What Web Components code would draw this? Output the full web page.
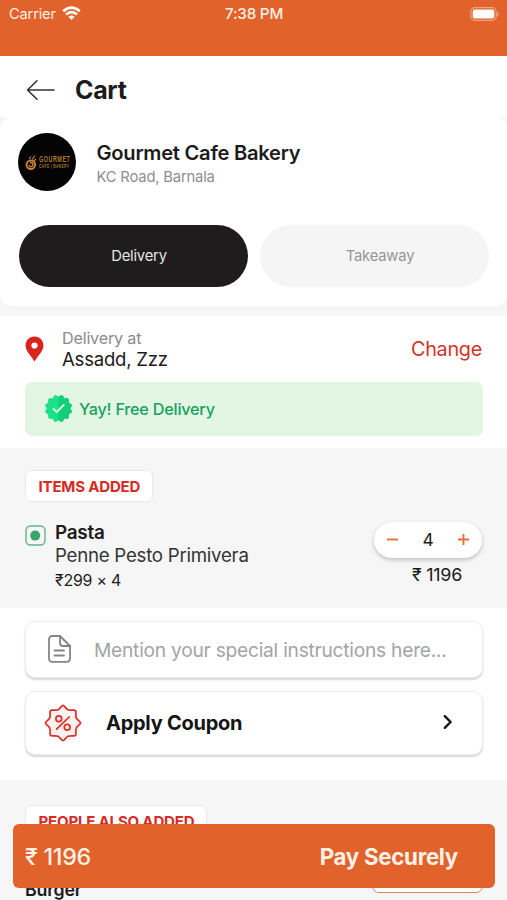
<!DOCTYPE html>
<html lang="en">
<head>
<meta charset="utf-8">
<title>Cart</title>
<style>
  body {
    margin: 0;
    height: 900px;
    overflow: hidden;
    background: #f6f6f6;
    color: #1d1b1c;
    font-family: Inter, "Liberation Sans", sans-serif;
  }
</style>
</head>
<body>
<cart-page></cart-page>

<script>
// slightly tightened tracking, shared by every element
const BASE = '<style>* { letter-spacing: -.013em; }</style>';

const define = (name, html, setup) => {
  const template = document.createElement('template');
  template.innerHTML = BASE + html;
  customElements.define(name, class extends HTMLElement {
    constructor() {
      super();
      this.attachShadow({ mode: 'open' }).appendChild(template.content.cloneNode(true));
    }
    connectedCallback() {
      if (setup) setup(this, this.shadowRoot);
    }
  });
};

define('status-bar', `
  <style>
    :host {
      display: grid;
      grid-template-columns: 1fr auto 1fr;
      align-items: center;
      box-sizing: border-box;
      height: 56px;
      padding: 4px 8px 32px 9px;
      background: #e1632b;
      color: #fff0e6;
      font-size: 14.7px;
      line-height: 20px;
    }
    .carrier { display: flex; align-items: center; gap: 6px; }
    .carrier svg { margin-top: -1px; }
    .time { font-size: 15.2px; font-weight: 500; }
    .battery { justify-self: end; margin-top: -1px; }
    svg { display: block; }
  </style>
  <div class="carrier">
    <span>Carrier</span>
    <svg width="19" height="15" viewBox="0 0 19 15" fill="none" stroke="#fff" stroke-width="2.6">
      <path d="M1.2 5.2Q9.5-2 17.8 5.2M4 8.6Q9.5 3.8 15 8.6"/>
      <path d="M6.4 10.7Q9.5 8.2 12.6 10.7L9.5 14Z" fill="#fff" stroke="none"/>
    </svg>
  </div>
  <span class="time">7:38 PM</span>
  <svg class="battery" width="29" height="14" viewBox="0 0 29 14">
    <rect x=".8" y=".7" width="25.4" height="12.6" rx="4" fill="none" stroke="#f0a47f" stroke-width="1.2"/>
    <rect x="2.7" y="2.6" width="21.6" height="8.8" rx="2" fill="#fff"/>
    <path d="M27.3 4.8Q29 5.5 29 7T27.3 9.2Z" fill="#f0a47f"/>
  </svg>
`);

define('page-header', `
  <style>
    :host {
      display: flex;
      align-items: center;
      gap: 20px;
      box-sizing: border-box;
      height: 61px;
      padding: 0 26px 0;
      background: #fff;
    }
    svg { display: block; margin-top: 6px; }
    h1 { margin: 7px 0 0; font-size: 25px; line-height: 30px; font-weight: 700; }
  </style>
  <svg width="29" height="22" viewBox="0 0 29 22" fill="none" stroke="#333" stroke-width="1.6" stroke-linecap="round" stroke-linejoin="round">
    <path d="M28 11H1.5M11 1.8L1.5 11L11 20.2"/>
  </svg>
  <h1><slot></slot></h1>
`);

define('store-logo', `
  <style>
    :host {
      display: flex;
      align-items: center;
      justify-content: center;
      gap: 2px;
      flex: none;
      width: 58px;
      height: 58px;
      border-radius: 50%;
      background: #030303;
      color: #b07a35;
    }
    .words { display: grid; width: 31px; justify-items: start; }
    .name { font: 700 9px/9px "Liberation Sans", sans-serif; letter-spacing: .9px; transform: scaleX(.6); transform-origin: left; }
    .sub { font: 700 5px/4.5px "Liberation Sans", sans-serif; letter-spacing: .5px; white-space: pre; transform: scaleX(.67); transform-origin: left; }
    svg { display: block; flex: none; }
  </style>
  <svg width="12" height="17" viewBox="0 0 12 17" fill="none" stroke="#c58432">
    <circle cx="5.8" cy="10.8" r="4.2" stroke-width="2"/>
    <path d="M5 8.8Q9 8 7.5 12Q5 14 4 11" stroke-width="1.4"/>
    <path d="M4 5L6 2.5M7 5.5L10 1.5M9 7L11 5" stroke-width="1.2"/>
  </svg>
  <div class="words"><span class="name">GOURMET</span><span class="sub">CAFE | BAKERY</span></div>
`);

define('pill-tab', `
  <style>
    :host {
      display: flex;
      align-items: center;
      justify-content: center;
      flex: 1;
      height: 62px;
      border-radius: 31px;
      background: #f5f5f5;
      color: #969696;
      font-size: 14.8px;
      padding-left: 11px;
      box-sizing: border-box;
    }
    :host([selected]) { background: #1f1c1d; color: #e6e4e4; }
  </style>
  <slot></slot>
`);

define('store-card', `
  <style>
    :host {
      display: block;
      box-sizing: border-box;
      height: 189px;
      padding: 16px 18px 0;
      border-radius: 12px;
      background: #fff;
    }
    .store { display: flex; align-items: center; gap: 20.5px; }
    .text { padding-top: 4px; }
    h2 { margin: 0; font-size: 20.15px; line-height: 26px; font-weight: 600; }
    p { margin: 0; font-size: 14.8px; line-height: 22px; color: #8e8e8e; }
    .tabs { display: flex; gap: 12px; padding: 34.4px 0 0 1px; }
  </style>
  <div class="store">
    <store-logo></store-logo>
    <div class="text">
      <h2><slot name="name"></slot></h2>
      <p><slot name="address"></slot></p>
    </div>
  </div>
  <div class="tabs"><slot></slot></div>
`);

define('delivery-address', `
  <style>
    :host { display: flex; align-items: center; height: 42px; }
    svg { display: block; margin-right: 18px; }
    .text { flex: 1; }
    .label { font-size: 16.2px; line-height: 20px; color: #8b8b8b; }
    .value { font-size: 18.6px; line-height: 22px; }
    .change { font-size: 19.8px; color: #d3332b; margin-right: 1px; }
  </style>
  <svg width="19" height="26" viewBox="0 0 19 26">
    <path d="M9.5.5C4.2.5.6 4.4.6 9.4C.6 15 5.5 18.8 9.5 25.5C13.5 18.8 18.4 15 18.4 9.4C18.4 4.4 14.8.5 9.5.5Z" fill="#da251c"/>
    <circle cx="9.5" cy="9.5" r="3.1" fill="#fff"/>
  </svg>
  <div class="text">
    <div class="label">Delivery at</div>
    <div class="value"><slot></slot></div>
  </div>
  <span class="change">Change</span>
`);

define('offer-banner', `
  <style>
    :host {
      display: flex;
      align-items: center;
      gap: 6px;
      box-sizing: border-box;
      height: 54px;
      padding: 0 0 1px 19px;
      border-radius: 7px;
      background: #e3f6e3;
      color: #16a25d;
      font-size: 16.2px;
      font-weight: 500;
    }
    svg { display: block; }
  </style>
  <svg width="29" height="29" viewBox="-14.5 -14.5 29 29">
    <defs><clipPath id="right"><rect x="0" y="-15" width="15" height="30"/></clipPath></defs>
    <path class="burst" fill="#19e286" stroke="#19e286" stroke-linejoin="round"/>
    <path class="burst" fill="#12cf79" stroke="#12cf79" stroke-linejoin="round" clip-path="url(#right)"/>
    <path d="M-5 .3L-1.7 3.5L5.3-3.6" fill="none" stroke="#e9fff0" stroke-width="1.8" stroke-linecap="round"/>
  </svg>
  <slot></slot>
`, (host, root) => {
  // twelve-pointed seal
  const points = [];
  for (let i = 0; i < 24; i++) {
    const r = i % 2 ? 11.4 : 13.6;
    const a = (i + 1) * Math.PI / 12;
    points.push((r * Math.cos(a)).toFixed(2) + ' ' + (r * Math.sin(a)).toFixed(2));
  }
  root.querySelectorAll('.burst').forEach(p => p.setAttribute('d', 'M' + points.join('L') + 'Z'));
});

define('section-tag', `
  <style>
    :host {
      display: flex;
      align-items: center;
      box-sizing: border-box;
      width: fit-content;
      height: 32px;
      padding: 0 12px 0 12.5px;
      border: 1px solid #e9e9e9;
      border-radius: 6px;
      background: #fff;
      color: #da2a25;
      font-size: 15.05px;
      font-weight: 700;
      white-space: nowrap;
    }
  </style>
  <slot></slot>
`);

define('qty-stepper', `
  <style>
    :host {
      display: flex;
      align-items: center;
      justify-content: space-between;
      box-sizing: border-box;
      width: 108px;
      height: 36px;
      margin-right: 1px;
      padding: 0 12px 2px;
      border-radius: 18px;
      background: #fff;
      box-shadow: 0 2px 4px rgba(0, 0, 0, .22);
      font-size: 17.4px;
    }
    svg { display: block; }
  </style>
  <svg width="13" height="13" stroke="#e66b35" stroke-width="1.8"><path d="M1 6.5H12"/></svg>
  <slot></slot>
  <svg width="13" height="13" stroke="#e66b35" stroke-width="1.8"><path d="M1 6.5H12M6.5 1V12"/></svg>
`);

define('cart-item', `
  <style>
    :host { display: flex; }
    .veg { display: block; margin: 4px 9px 0 0; }
    .text { flex: 1; padding-top: 1px; }
    .name { font-size: 18.9px; line-height: 22px; font-weight: 600; }
    .detail { font-size: 18.65px; line-height: 23px; color: #343434; }
    .rate { padding-top: 1px; font-size: 15.9px; line-height: 26px; }
    .side { display: flex; flex-direction: column; align-items: flex-end; padding-top: 1px; }
    .total { padding: 5px 21px 0 0; font-size: 17.9px; line-height: 24px; }
  </style>
  <svg class="veg" width="21" height="21" viewBox="0 0 21 21">
    <rect x="1" y="1" width="19" height="19" rx="4.5" fill="none" stroke="#62b68b" stroke-width="1.4"/>
    <circle cx="10.2" cy="10.6" r="5" fill="#37a66b"/>
  </svg>
  <div class="text">
    <div class="name"><slot name="name"></slot></div>
    <div class="detail"><slot name="detail"></slot></div>
    <div class="rate"><slot name="rate"></slot></div>
  </div>
  <div class="side">
    <qty-stepper><slot name="qty"></slot></qty-stepper>
    <div class="total"><slot name="total"></slot></div>
  </div>
`);

define('action-card', `
  <style>
    :host {
      display: flex;
      align-items: center;
      box-sizing: border-box;
      border: 1px solid #ececec;
      border-radius: 10px;
      background: #fff;
      box-shadow: 0 2px 2px rgba(0, 0, 0, .16);
    }
    .label { flex: 1; }
  </style>
  <slot name="icon"></slot>
  <span class="label"><slot></slot></span>
  <slot name="end"></slot>
`);

define('note-icon', `
  <style>:host { display: block; } svg { display: block; }</style>
  <svg width="23" height="28" viewBox="0 0 23 28" fill="none" stroke="#858585" stroke-width="1.8" stroke-linecap="round" stroke-linejoin="round">
    <path d="M4.5 1H12L22 11V23.2Q22 26.8 18.5 26.8H4.5Q1 26.8 1 23.2V4.5Q1 1 4.5 1Z"/>
    <path d="M12 1V8Q12 11 15 11H22M6.5 15.5H16M6.5 20.5H16"/>
  </svg>
`);

define('coupon-icon', `
  <style>:host { display: block; } svg { display: block; }</style>
  <svg width="38" height="38" viewBox="-19 -19 38 38" fill="none" stroke="#da3025" stroke-width="1.7" stroke-linecap="round" stroke-linejoin="round">
    <path fill="#fff1f1" d="M0-17.6C1.4-17.6 3-14.3 5-13.3C6.5-12.6 9-12.9 11-12.9Q12.9-12.9 12.9-11C12.9-9 12.6-6.5 13.3-5C14.3-3 17.6-1.4 17.6 0C17.6 1.4 14.3 3 13.3 5C12.6 6.5 12.9 9 12.9 11Q12.9 12.9 11 12.9C9 12.9 6.5 12.6 5 13.3C3 14.3 1.4 17.6 0 17.6C-1.4 17.6-3 14.3-5 13.3C-6.5 12.6-9 12.9-11 12.9Q-12.9 12.9-12.9 11C-12.9 9-12.6 6.5-13.3 5C-14.3 3-17.6 1.4-17.6 0C-17.6-1.4-14.3-3-13.3-5C-12.6-6.5-12.9-9-12.9-11Q-12.9-12.9-11-12.9C-9-12.9-6.5-12.6-5-13.3C-3-14.3-1.4-17.6 0-17.6Z"/>
    <path d="M6.2-6L-6.4 6.2"/>
    <circle cx="-4.2" cy="-4.3" r="2.9"/>
    <circle cx="4.2" cy="4.2" r="2.9"/>
  </svg>
`);

define('chevron-icon', `
  <style>:host { display: block; } svg { display: block; }</style>
  <svg width="11" height="16" viewBox="0 0 11 16" fill="none" stroke="#161616" stroke-width="2.4" stroke-linecap="round" stroke-linejoin="round">
    <path d="M2.8 1.2L8.6 7L2.8 12.8"/>
  </svg>
`);

define('suggested-item', `
  <style>
    :host { display: flex; align-items: flex-end; justify-content: space-between; height: 61px; }
    .name { font-size: 17.8px; line-height: 20px; font-weight: 600; margin-bottom: -2px; }
    .add {
      box-sizing: border-box;
      width: 111px;
      height: 34px;
      margin: 0 0 5px;
      border: 1.4px solid #e58253;
      border-radius: 7px;
      background: #fff;
    }
  </style>
  <span class="name"><slot></slot></span>
  <div class="add"></div>
`);

define('pay-bar', `
  <style>
    :host {
      position: absolute;
      left: 13px;
      right: 12px;
      top: 824px;
      display: flex;
      align-items: center;
      justify-content: space-between;
      box-sizing: border-box;
      height: 64px;
      padding: 0 37px 0 12px;
      border-radius: 6px;
      background: #e1632b;
      color: #fff1e6;
      font-size: 23.3px;
    }
    .amount { font-weight: 500; padding-top: 1px; }
    .pay { font-size: 22.3px; font-weight: 700; }
  </style>
  <span class="amount"><slot></slot></span>
  <span class="pay">Pay Securely</span>
`);

define('cart-page', `
  <style>
    :host { display: block; }
    section { box-sizing: border-box; padding: 0 24px 0 25px; }
    .top { background: #f6f6f6; padding: 0 0 10px; }
    .address { height: 132px; padding-top: 12px; background: #fff; }
    .address offer-banner { margin-top: 12px; }
    .items { height: 160px; padding-top: 22px; background: #f6f6f6; }
    .items cart-item { margin-top: 19px; }
    .actions { display: flex; flex-direction: column; gap: 13px; height: 172px; padding-top: 13px; background: #fff; }
    .note { height: 57px; padding-left: 22px; font-size: 19.2px; color: #a2a5a5; }
    .note note-icon { margin-right: 23px; margin-top: -2px; }
    .coupon { height: 64px; padding: 0 29px 1px 18px; font-size: 20px; font-weight: 700; color: #151515; }
    .coupon coupon-icon { margin-right: 24px; }
    .more { height: 120px; padding-top: 25px; background: #f6f6f6; overflow: hidden; }
  </style>
  <status-bar></status-bar>
  <page-header>Cart</page-header>
  <section class="top">
    <store-card>
      <span slot="name">Gourmet Cafe Bakery</span>
      <span slot="address">KC Road, Barnala</span>
      <pill-tab selected>Delivery</pill-tab>
      <pill-tab>Takeaway</pill-tab>
    </store-card>
  </section>
  <section class="address">
    <delivery-address>Assadd, Zzz</delivery-address>
    <offer-banner>Yay! Free Delivery</offer-banner>
  </section>
  <section class="items">
    <section-tag>ITEMS ADDED</section-tag>
    <cart-item>
      <span slot="name">Pasta</span>
      <span slot="detail">Penne Pesto Primivera</span>
      <span slot="rate">₹299 × 4</span>
      <span slot="qty">4</span>
      <span slot="total">₹ 1196</span>
    </cart-item>
  </section>
  <section class="actions">
    <action-card class="note">
      <note-icon slot="icon"></note-icon>
      Mention your special instructions here...
    </action-card>
    <action-card class="coupon">
      <coupon-icon slot="icon"></coupon-icon>
      Apply Coupon
      <chevron-icon slot="end"></chevron-icon>
    </action-card>
  </section>
  <section class="more">
    <section-tag>PEOPLE ALSO ADDED</section-tag>
    <suggested-item>Burger</suggested-item>
  </section>
  <pay-bar>₹ 1196</pay-bar>
`);
</script>
</body>
</html>
